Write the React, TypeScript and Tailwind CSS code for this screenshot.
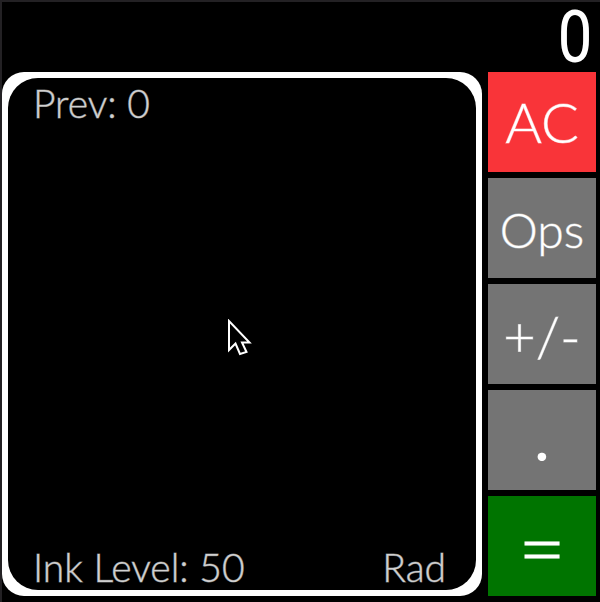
import type { ReactNode } from "react";

type KeyProps = { label: string; className: string; children: ReactNode };

function Key({ label, className, children }: KeyProps) {
  return (
    <button
      type="button"
      aria-label={label}
      className={`flex items-center justify-center leading-none text-white ${className}`}
    >
      {children}
    </button>
  );
}

function Cursor() {
  return (
    <svg
      aria-hidden="true"
      viewBox="0 0 24 38"
      className="absolute left-[47%] top-[47%] h-[38px] w-6"
      fill="#000"
      stroke="#fff"
      strokeWidth="2"
    >
      <path d="M1 2V31L7.500 24.500L12 35L18.500 33L14 23.500H21.500Z" />
    </svg>
  );
}

export default function App() {
  return (
    <div className="flex min-h-screen flex-col border-l-2 border-t-2 border-[#232124] bg-black pr-1 pb-1.5 font-['Lato','Open_Sans',sans-serif] font-light">
      <output className="flex h-[70px] items-center justify-end pr-1 font-['Roboto_Condensed','Roboto',sans-serif] text-[70px] leading-[70px] font-light text-white [-webkit-text-stroke:2px]">
        0
      </output>
      <main className="flex flex-1 gap-1.5">
        <section className="flex flex-1 rounded-[22px] bg-white p-1.5">
          <div className="relative flex flex-1 flex-col justify-between rounded-[30px] bg-black pr-[30px] pl-[25px] text-[39px] leading-[46px] text-[#d0d0d0] [-webkit-text-stroke:1px_#d0d0d080]">
            <p className="pt-0.5">Prev: 0</p>
            <div className="flex justify-between">
              <p>Ink Level: 50</p>
              <p>Rad</p>
            </div>
            <Cursor />
          </div>
        </section>
        <nav aria-label="Calculator keys" className="grid w-[108px] grid-rows-5 gap-1.5">
          <Key label="All clear" className="bg-[#f93439] text-[56px] [-webkit-text-stroke:1px_#ffffff80]">AC</Key>
          <Key label="Operations" className="bg-[#747474] pt-1 text-[48px] [-webkit-text-stroke:1px_#ffffff80]">Ops</Key>
          <Key label="Change sign" className="bg-[#747474] pt-1 text-[56px] [-webkit-text-stroke:1px_#ffffff80]">+/-</Key>
          <Key label="Decimal point" className="bg-[#747474] text-[56px] font-bold">.</Key>
          <Key label="Equals" className="bg-[#007400] text-[82px] [-webkit-text-stroke:1px]">=</Key>
        </nav>
      </main>
    </div>
  );
}
